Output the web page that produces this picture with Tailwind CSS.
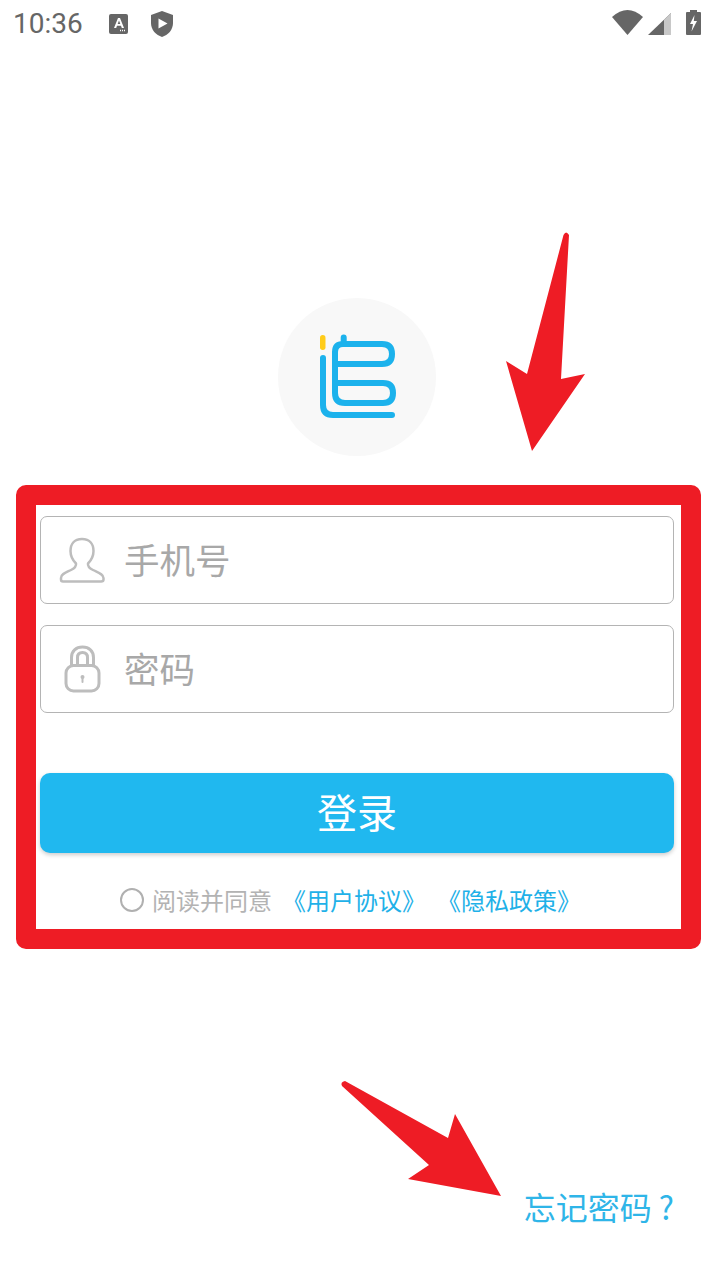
<!DOCTYPE html>
<html lang="zh">
<head>
<meta charset="utf-8">
<script src="https://cdn.jsdelivr.net/npm/@tailwindcss/browser@4"></script>
</head>
<body class="bg-white">
<div class="relative w-[714px] h-[1269px] overflow-hidden bg-white font-['Noto_Sans_CJK_SC','Noto_Sans',sans-serif]">
  <!-- status bar -->
  <div class="flex items-start justify-between h-[48px] pl-[13px] pr-[13px]">
    <div class="flex items-center h-[48px]">
      <span class="font-['Roboto',sans-serif] text-[28px] leading-[48px] text-[#666666] w-[96px]">10:36</span>
      <svg class="w-[20px] h-[22px]" viewBox="0 0 20 22"><rect x="0" y="1" width="19" height="20" rx="2" fill="#666"/><path d="M5 15 L9 5 L11 5 L15 15 L12.800 15 L12 12.800 L8 12.800 L7.200 15 Z M8.700 11 L11.300 11 L10 7.500 Z" fill="#fff" fill-rule="evenodd"/><path d="M11 17.500h5" stroke="#fff" stroke-width="1.300" stroke-dasharray="1 1"/></svg>
      <svg class="ml-[21px] w-[24px] h-[28px]" viewBox="0 0 24 28"><path d="M12 1 L23 5 V13 C23 20 18 25 12 27 C6 25 1 20 1 13 V5 Z" fill="#666"/><path d="M8.500 8.500 L17.500 13.500 L8.500 18.500 Z" fill="#fff"/></svg>
    </div>
    <div class="flex items-start pt-[10px]">
      <svg class="w-[31px] h-[25px]" viewBox="0 0 31 25"><path d="M0 7 Q15.500 -7 31 7 L15.500 25 Z" fill="#666"/></svg>
      <svg class="ml-[5px] w-[23px] h-[25px]" viewBox="0 0 23 25"><path d="M0 25 L23 3 V25 Z" fill="#666"/><path d="M16 9.700 L23 3 V25 H16 Z" fill="#c8c8c8"/></svg>
      <svg class="ml-[15px] w-[15px] h-[25px]" viewBox="0 0 15 25"><path d="M4 2 V0 H11 V2 H14 Q15 2 15 3 V24 Q15 25 14 25 H1 Q0 25 0 24 V3 Q0 2 1 2 Z" fill="#666"/><path d="M8.500 5 L4 14 H7 L5.500 21.500 L11 11 H7.800 Z" fill="#fff"/></svg>
    </div>
  </div>

  <!-- logo -->
  <div class="flex justify-center pt-[250px]">
    <div class="w-[158px] h-[158px] rounded-full bg-[#f8f8f8] flex items-center justify-center">
      <svg class="w-[90px] h-[95px]" viewBox="312 330 90 95" fill="none"><rect x="320" y="335" width="5.500" height="15" rx="2.700" fill="#ffcc1a"/><path d="M323 358 V405 Q323 415 333 415 H392" stroke="#1cb2ec" stroke-width="6" stroke-linecap="round"/><path d="M343.700 337.500 V344 M335 364 V352 Q335 344 343 344 H382 Q392 344 392 354 Q392 364 382 364 H335 V393 Q335 403 345 403 H383 Q393 403 393 393 Q393 383 383 383 H335" stroke="#1cb2ec" stroke-width="6" stroke-linecap="round" stroke-linejoin="round"/></svg>
    </div>
  </div>

  <!-- highlighted form -->
  <div class="mt-[29px] ml-[16px] w-[685px] h-[464px] border-[20px] border-[#ee1c25] rounded-[10px] px-[4px] pt-[11px]">
    <div class="flex items-center w-[634px] h-[88px] border border-[#b4b4b4] rounded-[7px]">
      <svg class="ml-[18px] w-[46px] h-[46px]" viewBox="0 0 46 46" fill="none" stroke="#bdbdbd" stroke-width="2.500"><path d="M23 2 C15 2 11.500 7.500 11.500 14 C11.500 20 14 23.500 17 26.500 C17.500 29.500 16 31 12 33 C7 35.500 2 37 2 41 V42.500 C2 44 3 44.500 4 44.500 H42 C43.500 44.500 44.500 44 44.500 42.500 V41 C44.500 37 39 35.500 34 33 C30 31 28.500 29.500 29 26.500 C32 23.500 34.500 20 34.500 14 C34.500 7.500 31 2 23 2 Z"/></svg>
      <span class="ml-[19px] mb-[3px] text-[35.500px] leading-[50px] text-[#a8a8a8]">手机号</span>
    </div>
    <div class="mt-[21px] flex items-center w-[634px] h-[88px] border border-[#b4b4b4] rounded-[7px]">
      <svg class="ml-[23px] w-[38px] h-[48px]" viewBox="0 0 38 48" fill="none" stroke="#bdbdbd" stroke-width="3"><path d="M7.500 21 V12.500 C7.500 6 12 2 18.500 2 C25 2 29.500 6 29.500 12.500 V21"/><path d="M13.500 21 V12.500 C13.500 9 15.500 7.500 18.500 7.500 C21.500 7.500 23.500 9 23.500 12.500 V21"/><rect x="2" y="20.500" width="33" height="25.500" rx="7.500"/><circle cx="18.500" cy="32" r="2" fill="#bdbdbd" stroke="none"/><path d="M18.500 32 V37" stroke-width="2" stroke-linecap="round"/></svg>
      <span class="ml-[22px] mb-[3px] text-[35.500px] leading-[50px] text-[#a8a8a8]">密码</span>
    </div>
    <button class="mt-[60px] block w-[634px] h-[80px] pb-[4px] rounded-[10px] bg-[#20b8ef] text-white text-[40px] leading-[76px] shadow-[0_2px_4px_rgba(0,0,0,0.2)]">登录</button>
    <div class="mt-[34px] flex items-center pl-[80px] h-[26px] text-[24px] leading-[26px] whitespace-nowrap">
      <span class="w-[24px] h-[24px] rounded-full border-2 border-[#b0b0b0]"></span>
      <span class="ml-[8px] text-[#b3b3b3]">阅读并同意</span>
      <span class="ml-[10px] text-[#1fb1e8]">《用户协议》</span>
      <span class="ml-[11px] text-[#1fb1e8]">《隐私政策》</span>
    </div>
  </div>

  <!-- forgot password -->
  <div class="mt-[235px] pr-[40px] flex justify-end">
    <span class="text-[32px] leading-[44px] text-[#2fb5e8] whitespace-pre">忘记密码 ?</span>
  </div>

  <!-- annotation arrows -->
  <svg class="absolute left-0 top-0 w-[714px] h-[1269px] pointer-events-none" viewBox="0 0 714 1269">
    <path d="M563.500 235 Q566 230 569 235 L561 379 L585 374 L532 451 L506 361 L527 374 Z" fill="#ee1c25"/>
    <path d="M342 1086 Q340 1082 345 1081 L448 1138 L455 1114 L501 1196 L408 1179 L429 1165 Z" fill="#ee1c25"/>
  </svg>
</div>
</body>
</html>
